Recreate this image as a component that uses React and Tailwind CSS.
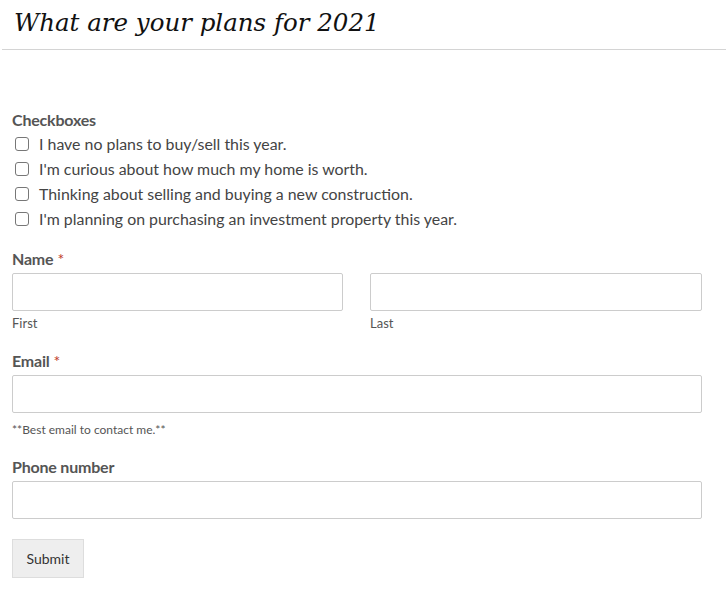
const options = [
  "I have no plans to buy/sell this year.",
  "I'm curious about how much my home is worth.",
  "Thinking about selling and buying a new construction.",
  "I'm planning on purchasing an investment property this year.",
];

function Label({ children, required }) {
  return (
    <div className="text-[16px] font-bold leading-[24px] text-[#555] tracking-[-0.2px]">
      {children}
      {required && <span className="ml-1 font-normal text-[#c0392b]">*</span>}
    </div>
  );
}

export default function App() {
  return (
    <div className="w-[726px] h-[607px] bg-white font-['Lato','Liberation_Sans',sans-serif] overflow-hidden">
      {/* Title */}
      <div className="ml-[2px] h-[50px] border-b border-[#d4d4d4] pl-[12px] pt-[7px]">
        <h1 className="font-['DejaVu_Serif','Liberation_Serif',serif] italic text-[24.5px] leading-[32px] text-[#111]">
          What are your plans for 2021
        </h1>
      </div>

      <form className="pl-[12px] pr-[24px]">
        {/* Checkboxes */}
        <div className="mt-[58px]">
          <Label>Checkboxes</Label>
          <div className="-mt-[1px]">
            {options.map((o) => (
              <label key={o} className="flex items-center h-[25px] text-[15.9px] text-[#444]">
                <span className="ml-[3px] w-[14px] h-[14px] rounded-[3px] border border-[#777] bg-white" />
                <span className="ml-[10px]">{o}</span>
              </label>
            ))}
          </div>
        </div>

        {/* Name */}
        <div className="mt-[16px]">
          <Label required>Name</Label>
          <div className="mt-[2px] flex gap-[27px]">
            <div className="w-[331px]">
              <div className="h-[38px] border border-[#ccc] rounded-[2px]" />
              <div className="mt-[3px] text-[13px] leading-[18px] text-[#555]">First</div>
            </div>
            <div className="w-[332px]">
              <div className="h-[38px] border border-[#ccc] rounded-[2px]" />
              <div className="mt-[3px] text-[13px] leading-[18px] text-[#555]">Last</div>
            </div>
          </div>
        </div>

        {/* Email */}
        <div className="mt-[17px]">
          <Label required>Email</Label>
          <div className="mt-[2px] w-[690px] h-[38px] border border-[#ccc] rounded-[2px]" />
          <div className="mt-[9px] text-[12px] leading-[16px] text-[#555]">**Best email to contact me.**</div>
        </div>

        {/* Phone */}
        <div className="mt-[17px]">
          <Label>Phone number</Label>
          <div className="mt-[2px] w-[690px] h-[38px] border border-[#ccc] rounded-[2px]" />
        </div>

        <button
          type="button"
          className="mt-[20px] w-[72px] h-[39px] bg-[#eee] border border-[#ddd] text-[14px] text-[#333]"
        >
          Submit
        </button>
      </form>
    </div>
  );
}
